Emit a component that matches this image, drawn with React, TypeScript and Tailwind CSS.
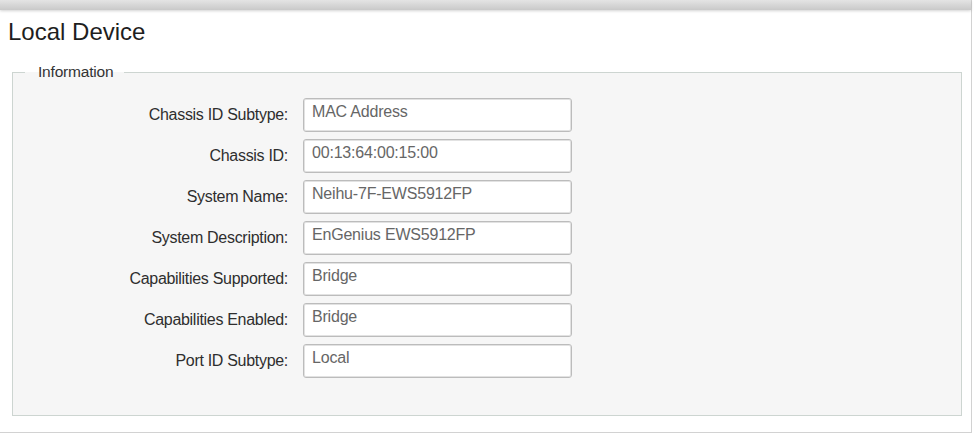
import React from "react";

const rows: [string, string][] = [
  ["Chassis ID Subtype:", "MAC Address"],
  ["Chassis ID:", "00:13:64:00:15:00"],
  ["System Name:", "Neihu-7F-EWS5912FP"],
  ["System Description:", "EnGenius EWS5912FP"],
  ["Capabilities Supported:", "Bridge"],
  ["Capabilities Enabled:", "Bridge"],
  ["Port ID Subtype:", "Local"],
];

export default function App() {
  return (
    <div
      className="w-[976px] h-[435px] bg-white overflow-hidden"
      style={{ fontFamily: '"Liberation Sans", Arial, sans-serif' }}
    >
      <div className="w-[972px] h-[433px] border-r border-b border-[#d2d2d2] bg-white flex flex-col">
        <div className="h-[10px] bg-gradient-to-b from-[#e4e4e4] to-[#c9c9c9] shadow-[0_1px_3px_rgba(0,0,0,0.18)]" />
        <div className="mt-[8px] pl-[8px] text-[24px] leading-[28px] text-[#1e1e1e]">
          Local Device
        </div>
        <fieldset className="ml-[12px] mt-[17px] w-[950px] h-[353px] border border-[#cdd5d1] bg-[#f6f6f6] pt-[17px]">
          <legend className="ml-[12px] pl-[13px] pr-[11px] text-[15.5px] leading-[18px] text-[#333] tracking-[-0.2px]">
            Information
          </legend>
          <div className="flex flex-col gap-[7px]">
            {rows.map(([label, value]) => (
              <div key={label} className="flex items-center">
                <div className="w-[290px] pr-[15px] text-right text-[16px] leading-[20px] text-[#2e2e2e] tracking-[-0.3px]">
                  {label}
                </div>
                <div className="w-[269px] h-[34px] bg-white border border-[#bcbcbc] rounded-[3px] shadow-[inset_0_0_0_1px_#e2e2e2] pl-[8px] pt-[3px] text-[16px] leading-[20px] text-[#666] tracking-[-0.2px]">
                  {value}
                </div>
              </div>
            ))}
          </div>
        </fieldset>
      </div>
    </div>
  );
}
